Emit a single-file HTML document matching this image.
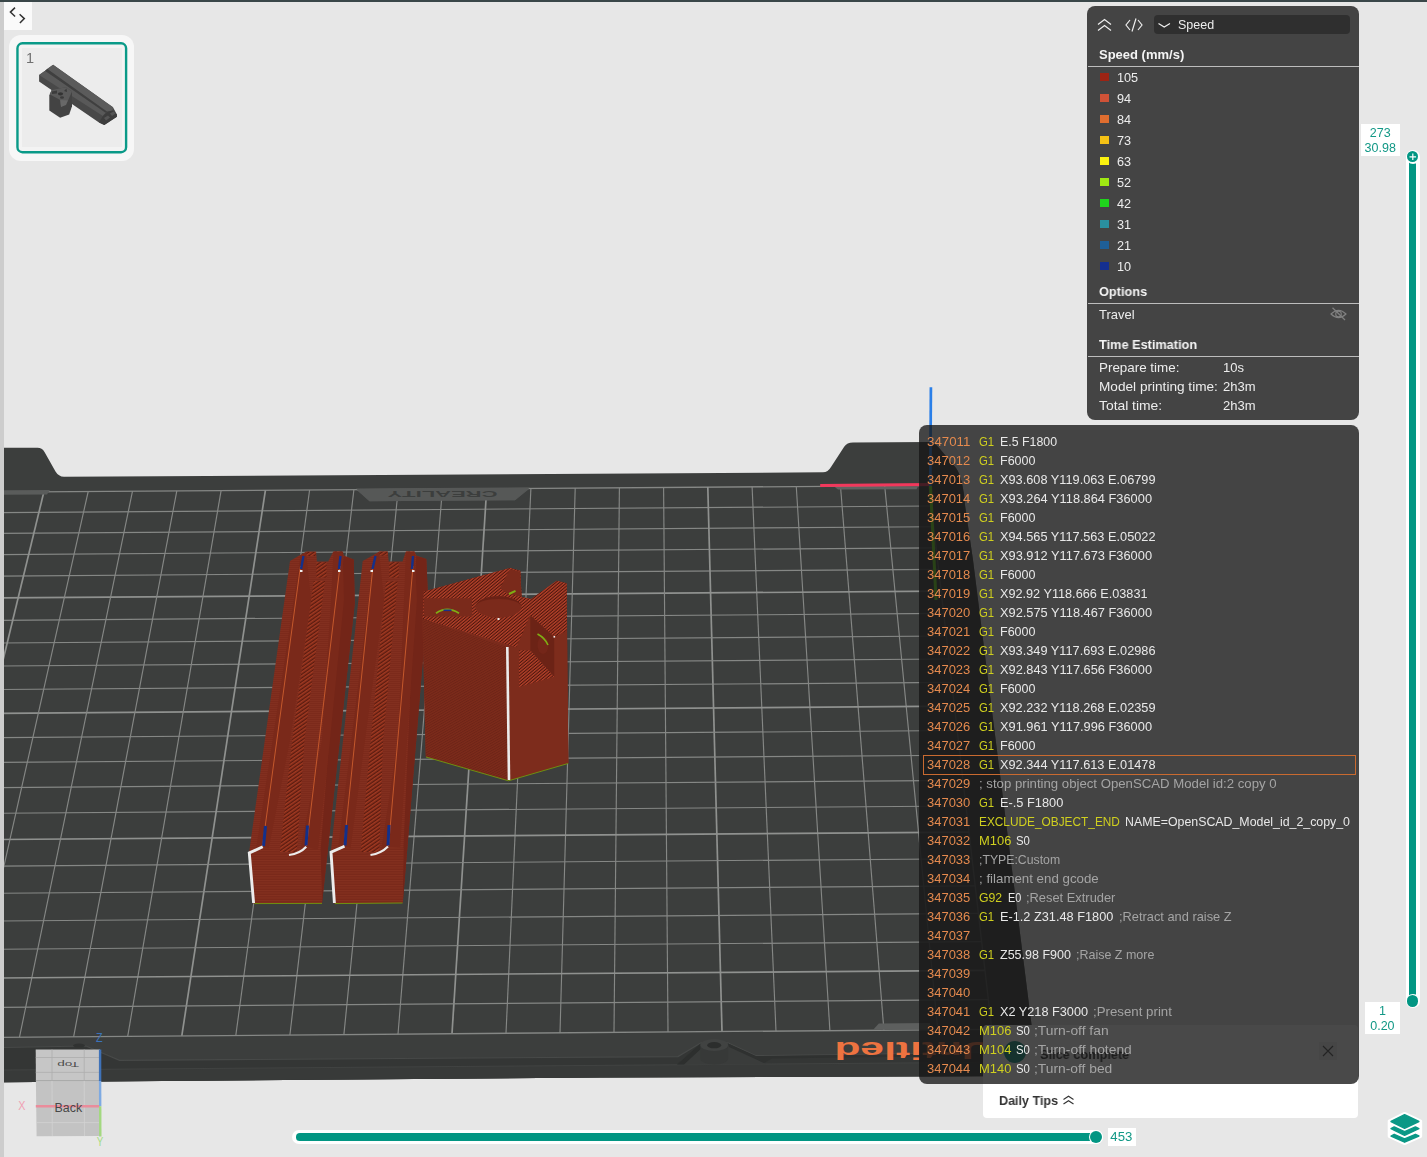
<!DOCTYPE html>
<html><head><meta charset="utf-8"><title>Preview</title>
<style>
html,body{margin:0;padding:0}
body{width:1427px;height:1157px;overflow:hidden;background:#e7e7e7;position:relative;font-family:"Liberation Sans",sans-serif;font-size:13px}
#scene{position:absolute;left:0;top:0}
.abs{position:absolute}
.teal,.b{will-change:transform}
.s{position:absolute;white-space:pre;transform-origin:0 50%;line-height:19px;height:19px;top:0}
.row{position:absolute;left:0;height:19px;width:100%}
#gp{will-change:transform;position:absolute;left:919px;top:425px;width:440px;height:659px;border-radius:8px;background:rgba(22,22,22,0.78);overflow:hidden}
#lp{will-change:transform;position:absolute;left:1087px;top:6px;width:272px;height:414px;border-radius:8px;background:#444444;color:#ededed;overflow:hidden}
#lp .lt{color:#ededed}
#lp .b{font-weight:bold;color:#f4f4f4}
.sw{position:absolute;left:13px;width:8.5px;height:8.5px}
.hr{position:absolute;left:1px;right:0;height:1px;background:#bdbdbd}
.teal{color:#129886}
</style></head><body>
<svg id="scene" width="1427" height="1157" viewBox="0 0 1427 1157">
<defs>
<pattern id="hat" width="3" height="3" patternUnits="userSpaceOnUse" patternTransform="rotate(-35)"><rect width="3" height="3" fill="#5a1b10"/><rect width="3" height="1.6" fill="#a23a22"/></pattern>
<pattern id="hat2" width="2.4" height="2.4" patternUnits="userSpaceOnUse" patternTransform="rotate(-40)"><rect width="2.4" height="2.4" fill="#4c160d"/><rect width="2.4" height="1.35" fill="#b4412a"/></pattern>
<pattern id="hz2" width="2.2" height="2.2" patternUnits="userSpaceOnUse" patternTransform="rotate(-30)"><rect width="2.2" height="2.2" fill="#7c2b1b"/><rect width="2.2" height="0.9" fill="#6d2417"/></pattern>
<pattern id="hz3" width="5" height="2.5" patternUnits="userSpaceOnUse"><rect width="5" height="2.5" fill="#7a291a"/><rect width="5" height="1" fill="#85311f"/></pattern>
<pattern id="hz" width="4" height="2" patternUnits="userSpaceOnUse"><rect width="4" height="2" fill="#7c2a1b"/><rect width="4" height="0.8" fill="#84301f"/></pattern>
</defs>
<path d="M4,447.8 L37.5,447.8 Q42,447.8 44.5,452 L55.5,471.5 Q58.5,476.6 64,476.8 L823,472.3 Q828,472.2 831,467 L844,447 Q847,442.6 853,442.6 L929,442 Q935,442.5 940,449 L956,468 Q963,478 965,505 L973,560 L1038,1076 L600,1077.6 L4,1082.2 Z" fill="#3c3e3d"/>
<clipPath id="bedclip"><path d="M4,447.8 L37.5,447.8 Q42,447.8 44.5,452 L55.5,471.5 Q58.5,476.6 64,476.8 L823,472.3 Q828,472.2 831,467 L844,447 Q847,442.6 853,442.6 L929,442 Q935,442.5 940,449 L956,468 Q963,478 965,505 L973,560 L1038,1076 L600,1077.6 L4,1082.2 Z"/></clipPath>
<path d="M4,1047.5 L86,1046 L119.5,1060.4 L678,1056.6 L701,1042.8 L728,1042.8 L755.5,1055.6 L1035,1052.5 L1038,1076 L600,1077.6 L4,1082.2 Z" fill="#343635"/>
<path d="M4,1070 L116,1069.2 L700,1064.6 L1036,1062 L1038,1076 L600,1077.6 L4,1082.2 Z" fill="#383a39"/>
<path d="M4,1047.5 L86,1046 L119.5,1060.4 L678,1056.6 L701,1042.8 L728,1042.8 L755.5,1055.6 L1029,1052.5" stroke="#474948" stroke-width="1.2" fill="none"/>
<path d="M4,1070 L116,1069.2 L700,1064.6 L1029.5,1062" stroke="#414342" stroke-width="1" fill="none"/>
<ellipse cx="79" cy="1045.6" rx="6" ry="2" fill="#303231"/>
<path d="M677,1064.5 L701,1043.5 L728,1043.5 L766,1064.2 Z" fill="#3a3c3b"/>
<path d="M677,1064.5 L700,1044 L704,1046 L684,1064.5 Z" fill="#2d2f2e"/>
<path d="M728,1043.5 L756,1056 L1029,1052.5 L1029.2,1055 L772,1058.5 L764,1063 L729,1047 Z" fill="#2f3130"/>
<path d="M700.3,1045 L700.3,1058.5 A13.9,6 0 0 0 728.1,1058.5 L728.1,1045 Z" fill="#373938"/>
<ellipse cx="714.2" cy="1045" rx="13.9" ry="6" fill="#414342"/>
<ellipse cx="714.2" cy="1045.2" rx="7" ry="3.1" fill="#2c2e2d"/>
<polygon points="356,489.6 530,488.3 515,500.3 369.5,501.2" fill="#565857"/>
<g><line x1="928.9" y1="485.6" x2="991.8" y2="1029.4" stroke="#858785" stroke-width="1.3"/><line x1="928.9" y1="485.6" x2="-44.8" y2="492.5" stroke="#858785" stroke-width="1.3"/><line x1="884.7" y1="485.9" x2="937.8" y2="1029.9" stroke="#858785" stroke-width="1.15"/><line x1="931.2" y1="506.0" x2="-50.5" y2="513.0" stroke="#858785" stroke-width="1.15"/><line x1="840.5" y1="486.2" x2="883.9" y2="1030.3" stroke="#858785" stroke-width="1.15"/><line x1="933.6" y1="526.7" x2="-56.3" y2="533.8" stroke="#858785" stroke-width="1.15"/><line x1="796.3" y1="486.5" x2="829.9" y2="1030.7" stroke="#858785" stroke-width="1.15"/><line x1="936.1" y1="547.8" x2="-62.2" y2="555.0" stroke="#858785" stroke-width="1.15"/><line x1="752.1" y1="486.8" x2="776.0" y2="1031.2" stroke="#858785" stroke-width="1.15"/><line x1="938.6" y1="569.3" x2="-68.2" y2="576.6" stroke="#858785" stroke-width="1.15"/><line x1="707.8" y1="487.1" x2="722.0" y2="1031.6" stroke="#8f918f" stroke-width="1.7"/><line x1="941.1" y1="591.2" x2="-74.3" y2="598.5" stroke="#8f918f" stroke-width="1.7"/><line x1="663.6" y1="487.4" x2="668.0" y2="1032.0" stroke="#858785" stroke-width="1.15"/><line x1="943.7" y1="613.4" x2="-80.5" y2="620.9" stroke="#858785" stroke-width="1.15"/><line x1="619.4" y1="487.8" x2="614.0" y2="1032.4" stroke="#858785" stroke-width="1.15"/><line x1="946.3" y1="636.0" x2="-86.8" y2="643.6" stroke="#858785" stroke-width="1.15"/><line x1="575.2" y1="488.1" x2="560.0" y2="1032.9" stroke="#858785" stroke-width="1.15"/><line x1="948.9" y1="659.0" x2="-93.3" y2="666.7" stroke="#858785" stroke-width="1.15"/><line x1="530.9" y1="488.4" x2="506.0" y2="1033.3" stroke="#858785" stroke-width="1.15"/><line x1="951.6" y1="682.4" x2="-99.8" y2="690.2" stroke="#858785" stroke-width="1.15"/><line x1="486.7" y1="488.7" x2="452.0" y2="1033.7" stroke="#8f918f" stroke-width="1.7"/><line x1="954.4" y1="706.2" x2="-106.5" y2="714.1" stroke="#8f918f" stroke-width="1.7"/><line x1="442.4" y1="489.0" x2="398.0" y2="1034.2" stroke="#858785" stroke-width="1.15"/><line x1="957.2" y1="730.5" x2="-113.3" y2="738.5" stroke="#858785" stroke-width="1.15"/><line x1="398.2" y1="489.3" x2="343.9" y2="1034.6" stroke="#858785" stroke-width="1.15"/><line x1="960.1" y1="755.2" x2="-120.2" y2="763.3" stroke="#858785" stroke-width="1.15"/><line x1="353.9" y1="489.6" x2="289.9" y2="1035.0" stroke="#858785" stroke-width="1.15"/><line x1="963.0" y1="780.3" x2="-127.2" y2="788.6" stroke="#858785" stroke-width="1.15"/><line x1="309.6" y1="490.0" x2="235.8" y2="1035.5" stroke="#858785" stroke-width="1.15"/><line x1="965.9" y1="806.0" x2="-134.4" y2="814.3" stroke="#858785" stroke-width="1.15"/><line x1="265.4" y1="490.3" x2="181.8" y2="1035.9" stroke="#8f918f" stroke-width="1.7"/><line x1="969.0" y1="832.1" x2="-141.7" y2="840.6" stroke="#8f918f" stroke-width="1.7"/><line x1="221.1" y1="490.6" x2="127.7" y2="1036.3" stroke="#858785" stroke-width="1.15"/><line x1="972.0" y1="858.7" x2="-149.2" y2="867.3" stroke="#858785" stroke-width="1.15"/><line x1="176.8" y1="490.9" x2="73.6" y2="1036.8" stroke="#858785" stroke-width="1.15"/><line x1="975.2" y1="885.8" x2="-156.7" y2="894.5" stroke="#858785" stroke-width="1.15"/><line x1="132.5" y1="491.2" x2="19.5" y2="1037.2" stroke="#858785" stroke-width="1.15"/><line x1="978.4" y1="913.4" x2="-164.5" y2="922.3" stroke="#858785" stroke-width="1.15"/><line x1="88.2" y1="491.5" x2="-34.6" y2="1037.6" stroke="#858785" stroke-width="1.15"/><line x1="981.6" y1="941.6" x2="-172.4" y2="950.6" stroke="#858785" stroke-width="1.15"/><line x1="43.9" y1="491.8" x2="-88.7" y2="1038.0" stroke="#8f918f" stroke-width="1.7"/><line x1="984.9" y1="970.3" x2="-180.4" y2="979.4" stroke="#8f918f" stroke-width="1.7"/><line x1="-0.4" y1="492.2" x2="-142.8" y2="1038.5" stroke="#858785" stroke-width="1.15"/><line x1="988.3" y1="999.6" x2="-188.6" y2="1008.9" stroke="#858785" stroke-width="1.15"/><line x1="-44.8" y1="492.5" x2="-197.0" y2="1038.9" stroke="#858785" stroke-width="1.3"/><line x1="991.8" y1="1029.4" x2="-197.0" y2="1038.9" stroke="#858785" stroke-width="1.3"/></g>
<rect x="919.5" y="425" width="130" height="659" fill="#3c3e3d" opacity="0.62" clip-path="url(#bedclip)"/>
<polygon points="834.5,486.8 918,486.4 916.5,489.3 838,489.6" fill="#616362"/>
<polygon points="878.8,1023.4 930,1023 930,1029.4 873.2,1029.8" fill="#5d5f5e"/>
<polygon points="4,490.2 50,490 47,494.4 4,494.8" fill="#5a5c5b"/>
<polygon points="356,488.6 530,487.4 515,500.3 369.5,501.2" fill="#565857"/>
<text transform="translate(497.5,490.6) rotate(180) scale(1,0.62)" font-family="Liberation Sans, sans-serif" font-weight="bold" font-size="15" fill="#3c3e3d" textLength="110" lengthAdjust="spacingAndGlyphs">CREALITY</text>
<text transform="translate(992.8,1041.7) rotate(180)" font-family="Liberation Sans, sans-serif" font-weight="bold" font-size="23.2" fill="#ee7340" textLength="158.4" lengthAdjust="spacingAndGlyphs">Untitled</text>
<line x1="820.2" y1="485.5" x2="931" y2="484.6" stroke="#f2385c" stroke-width="3"/>
<line x1="930.9" y1="387.3" x2="930.3" y2="486" stroke="#2a7fe8" stroke-width="2.7"/>
<line x1="930.5" y1="486" x2="936" y2="600" stroke="#6ee01e" stroke-width="3"/>
<g>
<polygon points="290,561 300.5,554.7 306.6,551.6 316.1,551.6 316.9,561.4 328.2,561.4 333.3,551.6 342.9,551.6 343.7,555.6 353.7,559.5 354.8,603 322,903.3 253.5,903.5 249,853" fill="url(#hz)"/>
<polygon points="343.7,556 353.7,559.5 354.8,603 322,903.3 320.5,852" fill="#732518"/>
<polygon points="316.4,562.2 326.5,562.2 326.5,577.6 316.4,577.6" fill="url(#hat)"/>
<polygon points="313.6,581 325,581 304.6,740 296.9,852 279.8,852 292.2,740" fill="url(#hat)"/>
<polygon points="306.5,552 315.7,552 315.9,556 306.3,556" fill="url(#hat)"/><polygon points="334,551.6 342,551.6 342.4,555 334,555.5" fill="url(#hat)"/>
<polygon points="300.5,556 306,552 311,600 290,740 268,852 256,850" fill="#7a291a"/>
<polygon points="333.5,552 342.9,552 344,600 330,740 318,850 300,852 322,740 331,600" fill="#7a291a"/>
<polygon points="249,853 263,846.5 289,855 306,846.5 320.5,851 322,903.3 253.5,903.5" fill="url(#hz3)"/>
<line x1="300.5" y1="566" x2="262.5" y2="846" stroke="#c4582c" stroke-width="1"/>
<line x1="340" y1="566" x2="306.5" y2="846" stroke="#c4582c" stroke-width="1"/>
<line x1="303.5" y1="556" x2="301" y2="569" stroke="#13308a" stroke-width="2.4"/>
<line x1="340.5" y1="556" x2="339" y2="569" stroke="#13308a" stroke-width="2.4"/>
<line x1="265.5" y1="826" x2="263.5" y2="846" stroke="#13308a" stroke-width="3"/>
<line x1="307.5" y1="825.5" x2="306" y2="845.5" stroke="#13308a" stroke-width="3"/>
<path d="M253.6,903 L249.3,853 L262.7,846.7" stroke="#ececec" stroke-width="2.9" fill="none"/>
<path d="M289,855 Q300,853.5 306.2,846.7" stroke="#ececec" stroke-width="2.2" fill="none"/>
<rect x="300" y="570" width="2.5" height="2" fill="#eee"/><rect x="338" y="570" width="2.5" height="2" fill="#eee"/>
<line x1="254.5" y1="903.6" x2="322" y2="903.4" stroke="#6f8f10" stroke-width="1"/>
</g>
<g>
<polygon points="362.7,561 374,554.7 379.2,551.6 387.8,551.6 388.7,561.4 402.5,561.4 405.9,551.6 414.6,551.6 416.3,555.6 426.3,559 428,598 402.8,902.8 334.3,903.5 330.8,852" fill="url(#hz)"/>
<polygon points="416.3,556 426.3,559 428,598 402.8,902.8 403.5,848" fill="#732518"/>
<polygon points="389.3,562.2 398.8,562.2 398.8,577.6 389.3,577.6" fill="url(#hat)"/>
<polygon points="386,581.5 397.7,581.5 383.2,740 379.3,852 360.6,852 370.7,740" fill="url(#hat)"/>
<polygon points="379.4,551.6 387.4,551.6 387.6,555.5 379.2,555.5" fill="url(#hat)"/><polygon points="406.3,551.6 414.3,551.6 414.8,555 406.3,555.5" fill="url(#hat)"/>
<polygon points="374,556 379,552 384,600 365,740 350,852 338,850" fill="#7a291a"/>
<polygon points="406,552 414.6,552 417,600 407,740 400,850 381,852 398,740 404,600" fill="#7a291a"/>
<polygon points="330.8,852 344.5,846 370.5,855 388,846.5 403.5,848 402.8,902.8 334.3,903.5" fill="url(#hz3)"/>
<line x1="373" y1="566" x2="344" y2="846" stroke="#c4582c" stroke-width="1"/>
<line x1="413" y1="566" x2="388.5" y2="846" stroke="#c4582c" stroke-width="1"/>
<line x1="375.5" y1="556" x2="372.5" y2="569" stroke="#13308a" stroke-width="2.4"/>
<line x1="413" y1="556" x2="412" y2="569" stroke="#13308a" stroke-width="2.4"/>
<line x1="346.5" y1="825" x2="345" y2="845.5" stroke="#13308a" stroke-width="3"/>
<line x1="389" y1="825" x2="388" y2="845.5" stroke="#13308a" stroke-width="3"/>
<path d="M334.4,903 L331,852.2 L344.5,846.2" stroke="#ececec" stroke-width="2.9" fill="none"/>
<path d="M370.5,855 Q381,853.5 388,846.5" stroke="#ececec" stroke-width="2.2" fill="none"/>
<rect x="370.5" y="570" width="2.5" height="2" fill="#eee"/><rect x="412" y="570" width="2.5" height="2" fill="#eee"/>
<line x1="335" y1="903.6" x2="402.5" y2="903" stroke="#6f8f10" stroke-width="1"/>
</g>
<g>
<polygon points="423.8,591.4 510.3,567.9 520.3,570.7 521.6,597 531,598.9 556.7,580.7 566.7,583.2 568.4,763.2 508.5,780.6 425.8,756.7 422.5,625" fill="#7c2b1c"/>
<polygon points="423.8,591.4 510.3,567.9 520.3,570.7 521.6,597 531,598.9 556.7,580.7 566.7,583.2 566.9,631 554.2,637 530.4,615.5 516.6,647.3 422.5,618.8" fill="url(#hat2)"/>
<polygon points="424,598.3 472,598.3 472,616.6 424,616.6" fill="#7a2a1b"/>
<polygon points="510.3,569 520.3,571.7 521.4,596.5 508,594 500,588" fill="#7a2a1b"/>
<ellipse cx="498.4" cy="607" rx="23" ry="10.7" fill="#7b2a1b"/>
<path d="M475.4,607 A23,10.7 0 0 1 521.4,607 A23,8 0 0 0 475.4,607 Z" fill="#6a2115"/>
<polygon points="422.5,618.8 506.7,647 508.5,780.6 425.8,756.7" fill="url(#hz2)"/>
<polygon points="506.7,647.3 516.6,647.3 530.4,615.5 554.2,637 566.9,631 568.4,763.2 508.5,780.6" fill="#7d2c1c"/>
<polygon points="530.4,615.5 554.2,637 554.2,676.8 530.4,650.5" fill="#6c2316"/>
<ellipse cx="543" cy="645" rx="5.5" ry="9" fill="#742619"/>
<polygon points="519,650.3 530.4,650.5 554.2,676.8 519,687" fill="url(#hat2)"/>
<line x1="507.3" y1="647" x2="509" y2="780" stroke="#ececec" stroke-width="2.6"/>
<path d="M426,757 L508.5,780.8 L568,763.5" stroke="#6f8f10" stroke-width="1" fill="none"/>
<path d="M436,613.3 Q447,605.5 459,613.3" stroke="#7fae14" stroke-width="1.8" fill="none"/>
<path d="M443.5,610.3 L451.5,610.3" stroke="#1b2f8a" stroke-width="1.6"/>
<path d="M537.5,634 Q545,638 548,645" stroke="#7fae14" stroke-width="1.6" fill="none"/>
<path d="M509,594 L515.5,590.8" stroke="#7fae14" stroke-width="2" fill="none"/>
<rect x="497.5" y="618" width="2" height="2" fill="#eee"/><rect x="553.5" y="636" width="1.6" height="1.6" fill="#eee"/>
</g>
</svg>
<div class="abs" style="left:0;top:0;width:1427px;height:2px;background:#3a4749"></div>
<div class="abs" style="left:0;top:2px;width:4px;height:1155px;background:#cdcdcd"></div>
<!-- collapse button -->
<div class="abs" style="left:4px;top:2px;width:28px;height:28px;background:#fafafa"></div>
<svg class="abs" style="left:4px;top:2px" width="28" height="28" viewBox="4 2 28 28"><path d="M15,7.6 L10.4,12.1 L15.1,16.5 M19.6,14.3 L24.3,18.6 L19.9,23" stroke="#333" stroke-width="1.5" fill="none"/></svg>
<!-- thumbnail -->
<div class="abs" style="left:9.3px;top:35px;width:125.2px;height:125.6px;border-radius:12px;background:#f7f7f7"></div>
<div class="abs" style="left:17px;top:42.8px;width:109.6px;height:110px;border-radius:5px;background:#f3f3f3"></div>
<svg class="abs" style="left:0;top:0" width="140" height="165"><rect x="17.45" y="43.3" width="108.65" height="108.9" rx="5" ry="5" fill="none" stroke="#0a9a88" stroke-width="2.4"/></svg>
<div class="abs" style="left:22.2px;top:48.2px;width:100.2px;height:98.5px;background:#ececec"></div>
<div class="abs" style="left:26px;top:49.5px;will-change:transform;font-size:14.5px;color:#707070;line-height:16px">1</div>
<svg class="abs" style="left:0;top:0" width="140" height="165">
<polygon points="39.1,75 45.1,70.8 47.2,69 53.1,64.8 113,107.2 116.9,114.6 116.9,116.7 104.3,125 99,122.6 39.1,81.6" fill="#484848"/>
<polygon points="47.2,69 53.1,64.8 113,107.2 112.7,110.4 107.1,111.8" fill="#5b5b5b"/>
<polygon points="39.1,75 45.1,70.8 107.1,111.8 102.9,116" fill="#595959"/>
<polygon points="45.1,70.8 47.2,69 107.1,111.8 105.5,112.8" fill="#3f3f3f"/>
<polygon points="102.9,116 107.1,111.8 112.7,110.4 116.9,114.6 116.9,116.7 104.3,125 99,122.6" fill="#3d3d3d"/>
<polygon points="104,118 108,115.5 110,117.5 106,120.5" fill="#555"/><polygon points="110,113.5 113.5,111.5 115.5,113.5 112,116" fill="#555"/>
<polygon points="49.3,95.6 51.7,90 65.7,87.2 72,91.4 72,106.2 69.2,114.6 60.1,117.7 49.3,110.4" fill="#434343"/>
<polygon points="51.7,90 65.7,87.2 72,91.4 68,100.5 61,107 60.2,100 49.6,94.3" fill="#5a5a5a"/>
<polygon points="60.2,100 68,100.5 66,105 61,107" fill="#686868"/>
<polygon points="52,91.5 57,90.5 57,93.5 52,94" fill="#3c3c3c"/><ellipse cx="60.5" cy="93.8" rx="2.6" ry="1.6" fill="#333"/><polygon points="64,91 66.5,88.5 67,92" fill="#3a3a3a"/><ellipse cx="62" cy="97.5" rx="2" ry="1.2" fill="#3a3a3a"/>
</svg>

<!-- notification + daily tips (under gcode panel) -->
<div class="abs" style="left:983px;top:1024.5px;width:375.3px;height:93.7px;border-radius:4px;background:#ffffff"></div>
<div class="abs" style="left:1003.5px;top:1040.5px;width:22px;height:22px;border-radius:11px;background:#129886"></div>
<div class="abs b" style="left:1040px;top:1046.5px;font-weight:bold;font-size:13px;color:#333;line-height:16px;transform:scaleX(0.98);transform-origin:0 50%">Slice complete</div>
<div class="abs" style="left:1319px;top:1042px;width:18px;height:18px;background:#f0f0f0"></div>
<svg class="abs" style="left:1319px;top:1042px" width="18" height="18"><path d="M4,4 L14,14 M14,4 L4,14" stroke="#555" stroke-width="1.2"/></svg>
<div class="abs" style="will-change:transform;left:999px;top:1091.5px;font-weight:bold;font-size:13px;color:#333;line-height:17px;transform:scaleX(0.965);transform-origin:0 50%">Daily Tips</div>
<svg class="abs" style="left:1062px;top:1094px" width="14" height="12"><path d="M1.5,5.5 L6.5,2.2 L11.5,5.5 M1.5,10 L6.5,6.7 L11.5,10" stroke="#333" stroke-width="1.1" fill="none"/></svg>

<!-- gcode panel -->
<div id="gp">
<div class="abs" style="left:3.5px;top:330px;width:431px;height:17.5px;border:1px solid #c96a30;box-sizing:content-box"></div>
<div class="row" style="top:7.0px"><span class="s" style="left:8.3px;color:#e58a4e;transform:scaleX(1.0209)">347011</span><span class="s" style="left:60.0px;color:#cfcf1f;transform:scaleX(0.8707)">G1</span><span class="s" style="left:81.2px;color:#e8e8e8;transform:scaleX(0.9502)">E.5 F1800</span></div>
<div class="row" style="top:26.0px"><span class="s" style="left:8.3px;color:#e58a4e;transform:scaleX(0.9982)">347012</span><span class="s" style="left:60.0px;color:#cfcf1f;transform:scaleX(0.8707)">G1</span><span class="s" style="left:81.2px;color:#e8e8e8;transform:scaleX(0.9631)">F6000</span></div>
<div class="row" style="top:45.0px"><span class="s" style="left:8.3px;color:#e58a4e;transform:scaleX(0.9982)">347013</span><span class="s" style="left:60.0px;color:#cfcf1f;transform:scaleX(0.8707)">G1</span><span class="s" style="left:81.2px;color:#e8e8e8;transform:scaleX(0.9808)">X93.608 Y119.063 E.06799</span></div>
<div class="row" style="top:64.0px"><span class="s" style="left:8.3px;color:#e58a4e;transform:scaleX(0.9982)">347014</span><span class="s" style="left:60.0px;color:#cfcf1f;transform:scaleX(0.8707)">G1</span><span class="s" style="left:81.2px;color:#e8e8e8;transform:scaleX(0.9857)">X93.264 Y118.864 F36000</span></div>
<div class="row" style="top:83.0px"><span class="s" style="left:8.3px;color:#e58a4e;transform:scaleX(0.9982)">347015</span><span class="s" style="left:60.0px;color:#cfcf1f;transform:scaleX(0.8707)">G1</span><span class="s" style="left:81.2px;color:#e8e8e8;transform:scaleX(0.9631)">F6000</span></div>
<div class="row" style="top:102.0px"><span class="s" style="left:8.3px;color:#e58a4e;transform:scaleX(0.9982)">347016</span><span class="s" style="left:60.0px;color:#cfcf1f;transform:scaleX(0.8707)">G1</span><span class="s" style="left:81.2px;color:#e8e8e8;transform:scaleX(0.9808)">X94.565 Y117.563 E.05022</span></div>
<div class="row" style="top:121.0px"><span class="s" style="left:8.3px;color:#e58a4e;transform:scaleX(0.9982)">347017</span><span class="s" style="left:60.0px;color:#cfcf1f;transform:scaleX(0.8707)">G1</span><span class="s" style="left:81.2px;color:#e8e8e8;transform:scaleX(0.9857)">X93.912 Y117.673 F36000</span></div>
<div class="row" style="top:140.0px"><span class="s" style="left:8.3px;color:#e58a4e;transform:scaleX(0.9982)">347018</span><span class="s" style="left:60.0px;color:#cfcf1f;transform:scaleX(0.8707)">G1</span><span class="s" style="left:81.2px;color:#e8e8e8;transform:scaleX(0.9631)">F6000</span></div>
<div class="row" style="top:159.0px"><span class="s" style="left:8.3px;color:#e58a4e;transform:scaleX(0.9982)">347019</span><span class="s" style="left:60.0px;color:#cfcf1f;transform:scaleX(0.8707)">G1</span><span class="s" style="left:81.2px;color:#e8e8e8;transform:scaleX(0.9748)">X92.92 Y118.666 E.03831</span></div>
<div class="row" style="top:178.0px"><span class="s" style="left:8.3px;color:#e58a4e;transform:scaleX(0.9982)">347020</span><span class="s" style="left:60.0px;color:#cfcf1f;transform:scaleX(0.8707)">G1</span><span class="s" style="left:81.2px;color:#e8e8e8;transform:scaleX(0.9857)">X92.575 Y118.467 F36000</span></div>
<div class="row" style="top:197.0px"><span class="s" style="left:8.3px;color:#e58a4e;transform:scaleX(0.9982)">347021</span><span class="s" style="left:60.0px;color:#cfcf1f;transform:scaleX(0.8707)">G1</span><span class="s" style="left:81.2px;color:#e8e8e8;transform:scaleX(0.9631)">F6000</span></div>
<div class="row" style="top:216.0px"><span class="s" style="left:8.3px;color:#e58a4e;transform:scaleX(0.9982)">347022</span><span class="s" style="left:60.0px;color:#cfcf1f;transform:scaleX(0.8707)">G1</span><span class="s" style="left:81.2px;color:#e8e8e8;transform:scaleX(0.9808)">X93.349 Y117.693 E.02986</span></div>
<div class="row" style="top:235.0px"><span class="s" style="left:8.3px;color:#e58a4e;transform:scaleX(0.9982)">347023</span><span class="s" style="left:60.0px;color:#cfcf1f;transform:scaleX(0.8707)">G1</span><span class="s" style="left:81.2px;color:#e8e8e8;transform:scaleX(0.9857)">X92.843 Y117.656 F36000</span></div>
<div class="row" style="top:254.0px"><span class="s" style="left:8.3px;color:#e58a4e;transform:scaleX(0.9982)">347024</span><span class="s" style="left:60.0px;color:#cfcf1f;transform:scaleX(0.8707)">G1</span><span class="s" style="left:81.2px;color:#e8e8e8;transform:scaleX(0.9631)">F6000</span></div>
<div class="row" style="top:273.0px"><span class="s" style="left:8.3px;color:#e58a4e;transform:scaleX(0.9982)">347025</span><span class="s" style="left:60.0px;color:#cfcf1f;transform:scaleX(0.8707)">G1</span><span class="s" style="left:81.2px;color:#e8e8e8;transform:scaleX(0.9808)">X92.232 Y118.268 E.02359</span></div>
<div class="row" style="top:292.0px"><span class="s" style="left:8.3px;color:#e58a4e;transform:scaleX(0.9982)">347026</span><span class="s" style="left:60.0px;color:#cfcf1f;transform:scaleX(0.8707)">G1</span><span class="s" style="left:81.2px;color:#e8e8e8;transform:scaleX(0.9857)">X91.961 Y117.996 F36000</span></div>
<div class="row" style="top:311.0px"><span class="s" style="left:8.3px;color:#e58a4e;transform:scaleX(0.9982)">347027</span><span class="s" style="left:60.0px;color:#cfcf1f;transform:scaleX(0.8707)">G1</span><span class="s" style="left:81.2px;color:#e8e8e8;transform:scaleX(0.9631)">F6000</span></div>
<div class="row" style="top:330.0px"><span class="s" style="left:8.3px;color:#e58a4e;transform:scaleX(0.9982)">347028</span><span class="s" style="left:60.0px;color:#cfcf1f;transform:scaleX(0.8707)">G1</span><span class="s" style="left:81.2px;color:#e8e8e8;transform:scaleX(0.9808)">X92.344 Y117.613 E.01478</span></div>
<div class="row" style="top:349.0px"><span class="s" style="left:8.3px;color:#e58a4e;transform:scaleX(0.9982)">347029</span><span class="s" style="left:60.3px;color:#a4a4a4;transform:scaleX(1.0144)">; stop printing object OpenSCAD Model id:2 copy 0</span></div>
<div class="row" style="top:368.0px"><span class="s" style="left:8.3px;color:#e58a4e;transform:scaleX(0.9982)">347030</span><span class="s" style="left:60.0px;color:#cfcf1f;transform:scaleX(0.8707)">G1</span><span class="s" style="left:81.2px;color:#e8e8e8;transform:scaleX(0.9842)">E-.5 F1800</span></div>
<div class="row" style="top:387.0px"><span class="s" style="left:8.3px;color:#e58a4e;transform:scaleX(0.9982)">347031</span><span class="s" style="left:60.3px;color:#cfcf1f;transform:scaleX(0.9114)">EXCLUDE_OBJECT_END</span><span class="s" style="left:206.2px;color:#e8e8e8;transform:scaleX(0.9507)">NAME=OpenSCAD_Model_id_2_copy_0</span></div>
<div class="row" style="top:406.0px"><span class="s" style="left:8.3px;color:#e58a4e;transform:scaleX(0.9982)">347032</span><span class="s" style="left:60.3px;color:#cfcf1f;transform:scaleX(0.9963)">M106</span><span class="s" style="left:96.7px;color:#e8e8e8;transform:scaleX(0.8742)">S0</span></div>
<div class="row" style="top:425.0px"><span class="s" style="left:8.3px;color:#e58a4e;transform:scaleX(0.9982)">347033</span><span class="s" style="left:60.3px;color:#a4a4a4;transform:scaleX(0.9434)">;TYPE:Custom</span></div>
<div class="row" style="top:444.0px"><span class="s" style="left:8.3px;color:#e58a4e;transform:scaleX(0.9982)">347034</span><span class="s" style="left:60.3px;color:#a4a4a4;transform:scaleX(1.0224)">; filament end gcode</span></div>
<div class="row" style="top:463.0px"><span class="s" style="left:8.3px;color:#e58a4e;transform:scaleX(0.9982)">347035</span><span class="s" style="left:60.3px;color:#cfcf1f;transform:scaleX(0.9442)">G92</span><span class="s" style="left:88.7px;color:#e8e8e8;transform:scaleX(0.8365)">E0</span><span class="s" style="left:106.6px;color:#a4a4a4;transform:scaleX(0.9899)">;Reset Extruder</span></div>
<div class="row" style="top:482.0px"><span class="s" style="left:8.3px;color:#e58a4e;transform:scaleX(0.9982)">347036</span><span class="s" style="left:60.0px;color:#cfcf1f;transform:scaleX(0.8707)">G1</span><span class="s" style="left:81.2px;color:#e8e8e8;transform:scaleX(0.9799)">E-1.2 Z31.48 F1800</span><span class="s" style="left:200.0px;color:#a4a4a4;transform:scaleX(0.9864)">;Retract and raise Z</span></div>
<div class="row" style="top:501.0px"><span class="s" style="left:8.3px;color:#e58a4e;transform:scaleX(0.9982)">347037</span></div>
<div class="row" style="top:520.0px"><span class="s" style="left:8.3px;color:#e58a4e;transform:scaleX(0.9982)">347038</span><span class="s" style="left:60.0px;color:#cfcf1f;transform:scaleX(0.8707)">G1</span><span class="s" style="left:81.2px;color:#e8e8e8;transform:scaleX(0.9632)">Z55.98 F900</span><span class="s" style="left:156.8px;color:#a4a4a4;transform:scaleX(0.9604)">;Raise Z more</span></div>
<div class="row" style="top:539.0px"><span class="s" style="left:8.3px;color:#e58a4e;transform:scaleX(0.9982)">347039</span></div>
<div class="row" style="top:558.0px"><span class="s" style="left:8.3px;color:#e58a4e;transform:scaleX(0.9982)">347040</span></div>
<div class="row" style="top:577.0px"><span class="s" style="left:8.3px;color:#e58a4e;transform:scaleX(0.9982)">347041</span><span class="s" style="left:60.0px;color:#cfcf1f;transform:scaleX(0.8707)">G1</span><span class="s" style="left:81.2px;color:#e8e8e8;transform:scaleX(0.9766)">X2 Y218 F3000</span><span class="s" style="left:173.5px;color:#a4a4a4;transform:scaleX(1.0205)">;Present print</span></div>
<div class="row" style="top:596.0px"><span class="s" style="left:8.3px;color:#e58a4e;transform:scaleX(0.9982)">347042</span><span class="s" style="left:60.3px;color:#cfcf1f;transform:scaleX(0.9963)">M106</span><span class="s" style="left:96.7px;color:#e8e8e8;transform:scaleX(0.8742)">S0</span><span class="s" style="left:115.2px;color:#a4a4a4;transform:scaleX(1.0643)">;Turn-off fan</span></div>
<div class="row" style="top:615.0px"><span class="s" style="left:8.3px;color:#e58a4e;transform:scaleX(0.9982)">347043</span><span class="s" style="left:60.3px;color:#cfcf1f;transform:scaleX(0.9963)">M104</span><span class="s" style="left:96.7px;color:#e8e8e8;transform:scaleX(0.8742)">S0</span><span class="s" style="left:115.2px;color:#a4a4a4;transform:scaleX(1.0656)">;Turn-off hotend</span></div>
<div class="row" style="top:634.0px"><span class="s" style="left:8.3px;color:#e58a4e;transform:scaleX(0.9982)">347044</span><span class="s" style="left:60.3px;color:#cfcf1f;transform:scaleX(0.9963)">M140</span><span class="s" style="left:96.7px;color:#e8e8e8;transform:scaleX(0.8742)">S0</span><span class="s" style="left:115.2px;color:#a4a4a4;transform:scaleX(1.0623)">;Turn-off bed</span></div>
</div>

<!-- legend panel -->
<div id="lp">
<svg class="abs" style="left:0;top:0" width="272" height="40"><path d="M11,18.5 L17.5,13.5 L24,18.5 M11,24.5 L17.5,19.5 L24,24.5" stroke="#eee" stroke-width="1.2" fill="none"/><path d="M43,14 L39,19 L43,24 M51,14 L55,19 L51,24 M49,12.5 L45,25.5" stroke="#eee" stroke-width="1.2" fill="none"/></svg>
<div class="abs" style="left:67px;top:8.6px;width:196.3px;height:19.4px;border-radius:4px;background:#2f2f2f"></div>
<svg class="abs" style="left:69px;top:12.8px" width="16" height="12"><path d="M2.5,4.5 L8.2,8.1 L14,4.5" stroke="#eee" stroke-width="1.2" fill="none"/></svg>
<span class="s lt" style="left:91px;top:8.8px;transform:scaleX(0.96)">Speed</span>
<span class="s b" style="left:12px;top:38.5px">Speed (mm/s)</span>
<div class="hr" style="top:60px"></div>
<div class="sw" style="top:66.7px;background:#9c2414"></div><span class="s lt" style="left:30px;top:61.5px;transform:scaleX(0.975)">105</span><div class="sw" style="top:87.7px;background:#cf5237"></div><span class="s lt" style="left:30px;top:82.5px;transform:scaleX(0.975)">94</span><div class="sw" style="top:108.7px;background:#df6d2f"></div><span class="s lt" style="left:30px;top:103.5px;transform:scaleX(0.975)">84</span><div class="sw" style="top:129.7px;background:#f4c115"></div><span class="s lt" style="left:30px;top:124.5px;transform:scaleX(0.975)">73</span><div class="sw" style="top:150.7px;background:#fbf210"></div><span class="s lt" style="left:30px;top:145.5px;transform:scaleX(0.975)">63</span><div class="sw" style="top:171.7px;background:#9fe812"></div><span class="s lt" style="left:30px;top:166.5px;transform:scaleX(0.975)">52</span><div class="sw" style="top:192.7px;background:#1fd41c"></div><span class="s lt" style="left:30px;top:187.5px;transform:scaleX(0.975)">42</span><div class="sw" style="top:213.7px;background:#2a8f9f"></div><span class="s lt" style="left:30px;top:208.5px;transform:scaleX(0.975)">31</span><div class="sw" style="top:234.7px;background:#1f5f97"></div><span class="s lt" style="left:30px;top:229.5px;transform:scaleX(0.975)">21</span><div class="sw" style="top:255.7px;background:#142f8f"></div><span class="s lt" style="left:30px;top:250.5px;transform:scaleX(0.975)">10</span>
<span class="s b" style="left:12px;top:276px;transform:scaleX(0.98)">Options</span>
<div class="hr" style="top:297px"></div>
<span class="s lt" style="left:12px;top:299px">Travel</span>
<svg class="abs" style="left:243px;top:300px" width="18" height="16"><path d="M1,8 Q8.5,0.8 16,8 Q8.5,15.2 1,8 Z" stroke="#808080" stroke-width="1.1" fill="none"/><circle cx="8.5" cy="8" r="2.8" stroke="#808080" stroke-width="1.1" fill="none"/><path d="M2.5,1.8 L15,14" stroke="#808080" stroke-width="1.2"/></svg>
<span class="s b" style="left:12px;top:329px;transform:scaleX(0.98)">Time Estimation</span>
<div class="hr" style="top:350px"></div>
<span class="s lt" style="left:12px;top:352px;transform:scaleX(1.03)">Prepare time:</span><span class="s lt" style="left:136px;top:352px">10s</span>
<span class="s lt" style="left:12px;top:371px;transform:scaleX(1.048)">Model printing time:</span><span class="s lt" style="left:136px;top:371px">2h3m</span>
<span class="s lt" style="left:12px;top:390px;transform:scaleX(1.066)">Total time:</span><span class="s lt" style="left:136px;top:390px">2h3m</span>
</div>

<!-- vertical slider -->
<div class="abs" style="left:1405.6px;top:152px;width:14px;height:854px;border-radius:7px;background:#ffffff"></div>
<div class="abs" style="left:1409.1px;top:156px;width:7px;height:846px;background:#029683"></div>
<div class="abs" style="left:1405.6px;top:149.5px;width:14px;height:14px;border-radius:7px;background:#fff"></div>
<div class="abs" style="left:1406.8px;top:150.7px;width:11.6px;height:11.6px;border-radius:6px;background:#029683"></div>
<svg class="abs" style="left:1406.8px;top:150.7px" width="12" height="12"><path d="M5.8,2.5 V9.1 M2.5,5.8 H9.1" stroke="#fff" stroke-width="1.2"/></svg>
<div class="abs" style="left:1405.6px;top:994px;width:14px;height:14px;border-radius:7px;background:#fff"></div>
<div class="abs" style="left:1406.8px;top:995.2px;width:11.6px;height:11.6px;border-radius:6px;background:#029683"></div>
<div class="abs teal" style="left:1361.3px;top:124.2px;width:38.5px;height:32px;background:#fff;font-size:12.5px;line-height:15px;text-align:center;padding-top:2px;box-sizing:border-box">273<br>30.98</div>
<div class="abs teal" style="left:1365px;top:1001.5px;width:34.8px;height:32px;background:#fff;font-size:12.5px;line-height:15px;text-align:center;padding-top:1.6px;box-sizing:border-box">1<br>0.20</div>

<!-- horizontal slider -->
<div class="abs" style="left:292.4px;top:1130px;width:811px;height:14.2px;border-radius:7.1px;background:#fff"></div>
<div class="abs" style="left:296px;top:1133.1px;width:800px;height:7.7px;border-radius:3.85px;background:#029683"></div>
<div class="abs" style="left:1088.8px;top:1129.9px;width:14px;height:14px;border-radius:7px;background:#fff"></div>
<div class="abs" style="left:1089.8px;top:1130.9px;width:12px;height:12px;border-radius:6px;background:#029683"></div>
<div class="abs teal" style="left:1108px;top:1128.2px;width:27.7px;height:17.7px;background:#fff;font-size:13.2px;line-height:18.6px;text-align:center;text-indent:-1px">453</div>

<!-- layers icon -->
<svg class="abs" style="left:1380px;top:1105px" width="47" height="45" viewBox="1380 1105 47 45">
<path d="M1389.2,1121.2 L1404.6,1113.4 L1420.7,1121.2 L1420.7,1136.3 L1404.6,1143.6 L1389.2,1136.3 Z" fill="#fff" stroke="#fff" stroke-width="3" stroke-linejoin="round"/>
<g fill="#0a9886" stroke="#0a9886" stroke-width="1.4" stroke-linejoin="round">
<path d="M1391,1121.5 L1404.6,1114.7 L1418.9,1121.5 L1404.6,1128.3 Z"/>
<path d="M1391,1128.7 L1394.2,1126.9 L1404.6,1131.7 L1415.4,1126.9 L1418.9,1128.7 L1404.6,1135.3 Z"/>
<path d="M1391,1136 L1394.2,1134.3 L1404.6,1138.9 L1415.4,1134.3 L1418.9,1136 L1404.6,1142.2 Z"/>
</g>
</svg>

<!-- view cube -->
<svg class="abs" style="left:0;top:1030px" width="120" height="127" viewBox="0 1030 120 127">
<polygon points="35.7,1049.5 100,1049.5 100,1080.6 35.9,1080.6" fill="#c6c6c6"/>
<polygon points="35.9,1080.6 100,1080.6 100,1135.9 36.6,1136.2" fill="#c3c3c3"/>
<path d="M35.8,1057.5 H100 M35.8,1072.4 H100 M35.9,1080.6 H100 M52,1049.5 V1081 M84.2,1049.5 V1081" stroke="#adadad" stroke-width="0.8" fill="none"/>
<path d="M52,1081 L52.3,1136 M84.2,1081 L84.5,1136 M36.4,1122.6 H100" stroke="#d2d2d2" stroke-width="0.8" fill="none"/>
<text transform="translate(79,1062.2) rotate(180) scale(1,0.55)" font-family="Liberation Sans, sans-serif" font-size="12" fill="#4a4a4a" textLength="21.6" lengthAdjust="spacingAndGlyphs">Top</text>
<line x1="35.8" y1="1106.3" x2="99.5" y2="1106.3" stroke="#ea8c9b" stroke-width="2.4"/>
<text x="54.5" y="1111.8" font-family="Liberation Sans, sans-serif" font-size="12" fill="#474747" textLength="27.6" lengthAdjust="spacingAndGlyphs">Back</text>
<line x1="100.1" y1="1049.5" x2="100.1" y2="1081" stroke="#3f72b8" stroke-width="2.4"/>
<line x1="100.1" y1="1081" x2="100.2" y2="1106.3" stroke="#7eaae2" stroke-width="2.4"/>
<line x1="100.2" y1="1106.3" x2="100.3" y2="1136.5" stroke="#a3d880" stroke-width="2.4"/>
<text x="18.2" y="1110" font-family="Liberation Sans, sans-serif" font-size="12.6" fill="#f0a2b4" textLength="7.2" lengthAdjust="spacingAndGlyphs">X</text>
<text x="96.8" y="1146" font-family="Liberation Sans, sans-serif" font-size="12" fill="#a6dc84" textLength="6.6" lengthAdjust="spacingAndGlyphs">Y</text>
<text x="96" y="1042.1" font-family="Liberation Sans, sans-serif" font-size="12.8" fill="#3b73ba" textLength="6.6" lengthAdjust="spacingAndGlyphs">Z</text>
</svg>
</body></html>
